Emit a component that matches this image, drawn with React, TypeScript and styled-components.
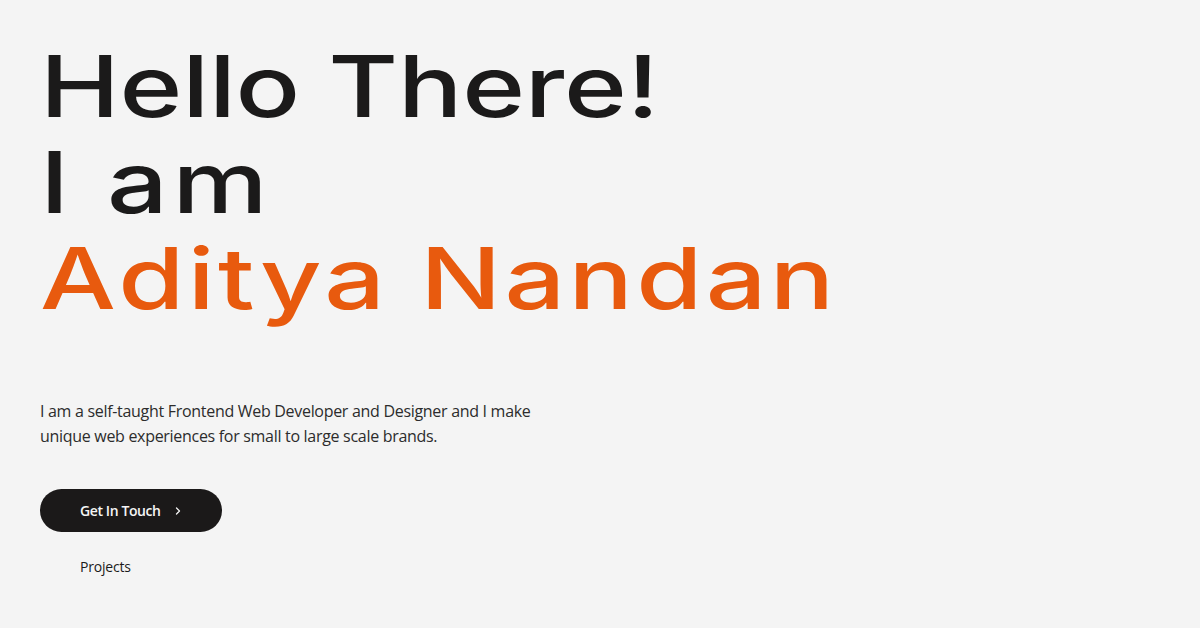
import React from "react";
import styled, { createGlobalStyle } from "styled-components";
import { ChevronRight } from "lucide-react";

const Global = createGlobalStyle`
  html, body { margin: 0; padding: 0; background: #f4f4f4; }
  body { font-family: "Open Sans", "Noto Sans", sans-serif; color: #1b1a1a; }
  * { box-sizing: border-box; }
`;

const Page = styled.main`
  min-height: 628px;
  padding: 39px 40px 0 40px;
  display: flex;
  flex-direction: column;
  align-items: flex-start;
  overflow: hidden;
`;

const Heading = styled.h1`
  margin: 0;
  font-family: "Inter", "Liberation Sans", sans-serif;
  font-weight: 500;
  font-size: 85px;
  line-height: 96px;
  transform: scaleX(1.26);
  transform-origin: left center;
  white-space: nowrap;
`;

const Line = styled.span<{ $accent?: boolean; $spacing?: number }>`
  display: block;
  letter-spacing: ${(p) => p.$spacing ?? 0}px;
  color: ${(p) => (p.$accent ? "#e85a0e" : "#1b1a1a")};
`;

const Intro = styled.p`
  margin: 72px 0 0 0;
  max-width: 520px;
  font-size: 16px;
  line-height: 25px;
  color: #2c2c2c;
  letter-spacing: -0.3px;
`;

const Actions = styled.div`
  margin-top: 40px;
  display: flex;
  flex-direction: column;
  align-items: flex-start;
  gap: 13px;
`;

const PrimaryButton = styled.a`
  display: inline-flex;
  align-items: center;
  gap: 11px;
  height: 43px;
  width: 182px;
  padding: 0 0 0 40px;
  border-radius: 22px;
  background: #1b1919;
  color: #f5f5f5;
  font-size: 14px;
  font-weight: 600;
  letter-spacing: -0.4px;
  white-space: nowrap;
  text-decoration: none;
  cursor: pointer;
`;

const SecondaryLink = styled.a`
  display: inline-flex;
  align-items: center;
  height: 43px;
  padding: 0 40px;
  color: #1b1a1a;
  font-size: 14px;
  font-weight: 500;
  letter-spacing: -0.2px;
  white-space: nowrap;
  text-decoration: none;
  cursor: pointer;
`;

export default function App() {
  return (
    <>
      <Global />
      <Page>
        <Heading>
          <Line $spacing={-0.2}>Hello There!</Line>
          <Line $spacing={3.7}>I am</Line>
          <Line $accent $spacing={2.6}>Aditya Nandan</Line>
        </Heading>
        <Intro>
          I am a self-taught Frontend Web Developer and Designer and I make unique web
          experiences for small to large scale brands.
        </Intro>
        <Actions>
          <PrimaryButton>
            Get In Touch
            <ChevronRight size={12} strokeWidth={2.5} />
          </PrimaryButton>
          <SecondaryLink>Projects</SecondaryLink>
        </Actions>
      </Page>
    </>
  );
}
